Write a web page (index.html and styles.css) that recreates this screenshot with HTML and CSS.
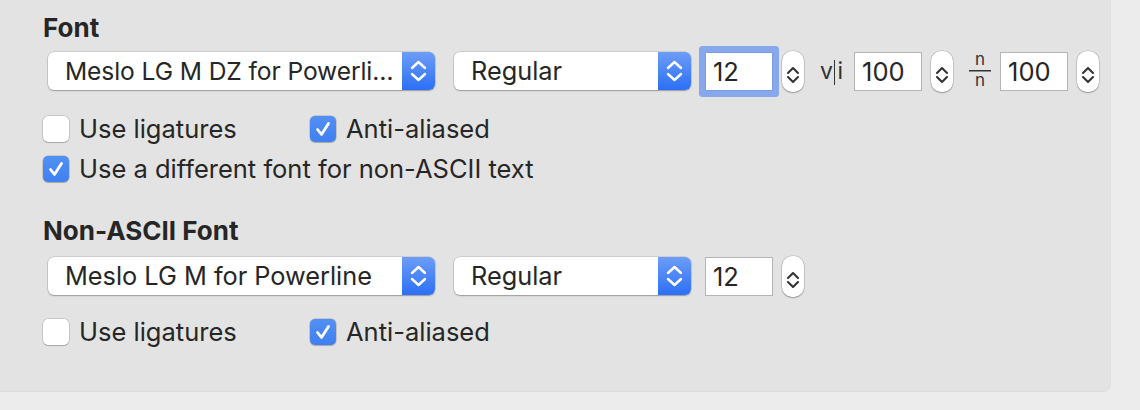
FILE: index.html
```html
<!DOCTYPE html>
<html>
<head>
<meta charset="utf-8">
<link rel="stylesheet" href="styles.css">
</head>
<body>
<div class="panel">
  <div class="title t1">Font</div>
  <div class="controls">
    <div class="popup wide"><span class="popup-label tight">Meslo LG M DZ for Powerli…</span><span class="popup-arrows"><svg width="33" height="38" viewBox="0 0 33 38"><path d="M10 16 L16.5 10 L23 16 M10 22 L16.5 28 L23 22" fill="none" stroke="#fff" stroke-width="2.4" stroke-linecap="round" stroke-linejoin="round"/></svg></span></div>
    <div class="popup narrow"><span class="popup-label">Regular</span><span class="popup-arrows"><svg width="33" height="38" viewBox="0 0 33 38"><path d="M10 16 L16.5 10 L23 16 M10 22 L16.5 28 L23 22" fill="none" stroke="#fff" stroke-width="2.4" stroke-linecap="round" stroke-linejoin="round"/></svg></span></div>
    <div class="field focused">12</div>
    <div class="stepper"><svg width="22" height="41" viewBox="0 0 22 41"><path d="M6 22 L11 17 L16 22 M6 26 L11 31 L16 26" fill="none" stroke="#333" stroke-width="2.1" stroke-linecap="round" stroke-linejoin="round"/></svg></div>
    <div class="glyph-vi">v<span class="bar"></span>i</div>
    <div class="field spaced">100</div>
    <div class="stepper"><svg width="22" height="41" viewBox="0 0 22 41"><path d="M6 22 L11 17 L16 22 M6 26 L11 31 L16 26" fill="none" stroke="#333" stroke-width="2.1" stroke-linecap="round" stroke-linejoin="round"/></svg></div>
    <div class="glyph-frac">n<br>n</div>
    <div class="field spaced2">100</div>
    <div class="stepper"><svg width="22" height="41" viewBox="0 0 22 41"><path d="M6 22 L11 17 L16 22 M6 26 L11 31 L16 26" fill="none" stroke="#333" stroke-width="2.1" stroke-linecap="round" stroke-linejoin="round"/></svg></div>
  </div>
  <div class="checks r1">
    <label class="check first"><span class="box"></span><span class="text">Use ligatures</span></label>
    <label class="check"><span class="box on"><svg width="26" height="26" viewBox="0 0 26 26"><path d="M7.5 13.5 L11.5 18.5 L18.5 7.5" fill="none" stroke="#fff" stroke-width="2.8" stroke-linecap="round" stroke-linejoin="round"/></svg></span><span class="text">Anti-aliased</span></label>
  </div>
  <div class="checks r2">
    <label class="check"><span class="box on"><svg width="26" height="26" viewBox="0 0 26 26"><path d="M7.5 13.5 L11.5 18.5 L18.5 7.5" fill="none" stroke="#fff" stroke-width="2.8" stroke-linecap="round" stroke-linejoin="round"/></svg></span><span class="text">Use a different font for non-ASCII text</span></label>
  </div>

  <div class="title t2">Non-ASCII Font</div>
  <div class="controls c2">
    <div class="popup wide"><span class="popup-label">Meslo LG M for Powerline</span><span class="popup-arrows"><svg width="33" height="38" viewBox="0 0 33 38"><path d="M10 16 L16.5 10 L23 16 M10 22 L16.5 28 L23 22" fill="none" stroke="#fff" stroke-width="2.4" stroke-linecap="round" stroke-linejoin="round"/></svg></span></div>
    <div class="popup narrow"><span class="popup-label">Regular</span><span class="popup-arrows"><svg width="33" height="38" viewBox="0 0 33 38"><path d="M10 16 L16.5 10 L23 16 M10 22 L16.5 28 L23 22" fill="none" stroke="#fff" stroke-width="2.4" stroke-linecap="round" stroke-linejoin="round"/></svg></span></div>
    <div class="field">12</div>
    <div class="stepper"><svg width="22" height="41" viewBox="0 0 22 41"><path d="M6 22 L11 17 L16 22 M6 26 L11 31 L16 26" fill="none" stroke="#333" stroke-width="2.1" stroke-linecap="round" stroke-linejoin="round"/></svg></div>
  </div>
  <div class="checks r3">
    <label class="check first"><span class="box"></span><span class="text">Use ligatures</span></label>
    <label class="check"><span class="box on"><svg width="26" height="26" viewBox="0 0 26 26"><path d="M7.5 13.5 L11.5 18.5 L18.5 7.5" fill="none" stroke="#fff" stroke-width="2.8" stroke-linecap="round" stroke-linejoin="round"/></svg></span><span class="text">Anti-aliased</span></label>
  </div>
</div>
</body>
</html>
```

FILE: styles.css
```css
html, body {
  margin: 0;
  padding: 0;
}
body {
  background: #ececec;
  width: 1140px;
  height: 410px;
  overflow: hidden;
  font-family: Inter, "Noto Sans", sans-serif;
  color: #262626;
}
.panel {
  width: 1110px;
  height: 391px;
  box-sizing: border-box;
  background: #e3e3e3;
  border-bottom-right-radius: 7px;
  box-shadow: 0 1px 0 #dcdcdc, 1px 0 0 #e0e0e0;
  padding-left: 43px;
  padding-top: 14px;
}
.title {
  font-weight: 700;
  font-size: 26px;
  line-height: 28px;
  height: 28px;
}
.t2 { margin-top: 35px; }
.controls {
  display: flex;
  align-items: center;
  height: 38px;
  margin-top: 10px;
}
.c2 { margin-top: 12px; }
.popup {
  display: flex;
  height: 38px;
  box-sizing: border-box;
  background: #fff;
  border-radius: 6px;
  box-shadow: 0 0 0 0.5px rgba(0,0,0,0.18), 0 1px 1.5px rgba(0,0,0,0.25);
  overflow: hidden;
  margin-left: 5px;
}
.popup.wide { width: 387px; }
.popup.narrow { width: 237px; margin-left: 19px; }
.popup-label {
  flex: 1;
  min-width: 0;
  font-size: 25.3px;
  line-height: 38px;
  padding-left: 17px;
  white-space: nowrap;
  overflow: hidden;
}
.popup-label.tight {
  font-size: 24.6px;
  letter-spacing: -0.1px;
}
.popup-arrows {
  width: 33px;
  height: 38px;
  flex: none;
  background: linear-gradient(#6c9df7, #2c6ff6);
  display: block;
}
.popup-arrows svg { display: block; }
.field {
  width: 68px;
  height: 39px;
  box-sizing: border-box;
  background: #fff;
  border: 1px solid #b4b4b4;
  font-size: 25.5px;
  line-height: 37px;
  padding-left: 7px;
  margin-left: 14px;
}
.field.focused {
  border-color: #7a9de0;
  box-shadow: 0 0 0 6px #87a8ec;
  border-radius: 1px;
}
.field.spaced { margin-left: 11px; }
.field.spaced2 { margin-left: 9px; }
.stepper {
  width: 22px;
  height: 41px;
  box-sizing: border-box;
  background: #fff;
  border-radius: 10px;
  box-shadow: 0 0 0 0.5px rgba(0,0,0,0.2), 0 1px 1.5px rgba(0,0,0,0.25);
  margin-left: 9px;
}
.stepper svg { display: block; }
.glyph-vi {
  margin-left: 16px;
  font-size: 23px;
  color: #333;
  display: flex;
  align-items: center;
  height: 38px;
}
.glyph-vi .bar {
  display: inline-block;
  width: 1.5px;
  height: 25px;
  background: #333;
  margin: 2px 2px 0 1px;
}
.glyph-frac {
  margin-left: 16px;
  margin-bottom: 3px;
  width: 22px;
  height: 42px;
  flex: none;
  text-align: center;
  font-size: 17px;
  line-height: 21px;
  color: #333;
  background: linear-gradient(#333, #333) center 21.5px / 22px 1.5px no-repeat;
}
.checks {
  display: flex;
  align-items: center;
  height: 27px;
}
.r1 { margin-top: 25px; }
.r2 { margin-top: 13px; }
.r3 { margin-top: 23px; }
.check {
  display: flex;
  align-items: center;
}
.check.first {
  width: 267px;
}
.box {
  width: 26px;
  height: 26px;
  box-sizing: border-box;
  border-radius: 5px;
  background: #fff;
  box-shadow: 0 0 0 0.5px rgba(0,0,0,0.25), 0 1px 1px rgba(0,0,0,0.15);
  display: block;
  flex: none;
}
.box svg { display: block; }
.box.on {
  background: linear-gradient(#5390f3, #3f7ff0);
}
.text {
  margin-left: 10px;
  font-size: 25.5px;
  white-space: nowrap;
}
```
